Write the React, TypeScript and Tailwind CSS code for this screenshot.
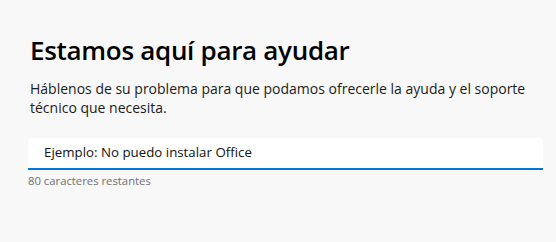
import React from "react";

export default function App() {
  return (
    <div className="min-h-[242px] w-full bg-[#f8f8f8] pl-[28px] pr-[13px] pt-[34px]" style={{ fontFamily: '"Open Sans", "Noto Sans", sans-serif' }}>
      <h1 className="pl-[2px] text-[26px] leading-[32px] font-semibold tracking-[-0.3px] text-[#000]">Estamos aquí para ayudar</h1>
      <p className="mt-[13px] pl-[2px] text-[14px] leading-[19px] text-[#1b1b1b]">
        Háblenos de su problema para que podamos ofrecerle la ayuda y el soporte técnico que necesita.
      </p>
      <div className="mt-[21px] flex h-[32px] w-full items-center rounded-t-[4px] border-b-2 border-[#0078d4] bg-white pl-[16px]">
        <span className="text-[13.3px] text-[#111]">Ejemplo: No puedo instalar Office</span>
      </div>
      <div className="mt-[3px] text-[11.3px] leading-[16px] text-[#707070]">80 caracteres restantes</div>
    </div>
  );
}
